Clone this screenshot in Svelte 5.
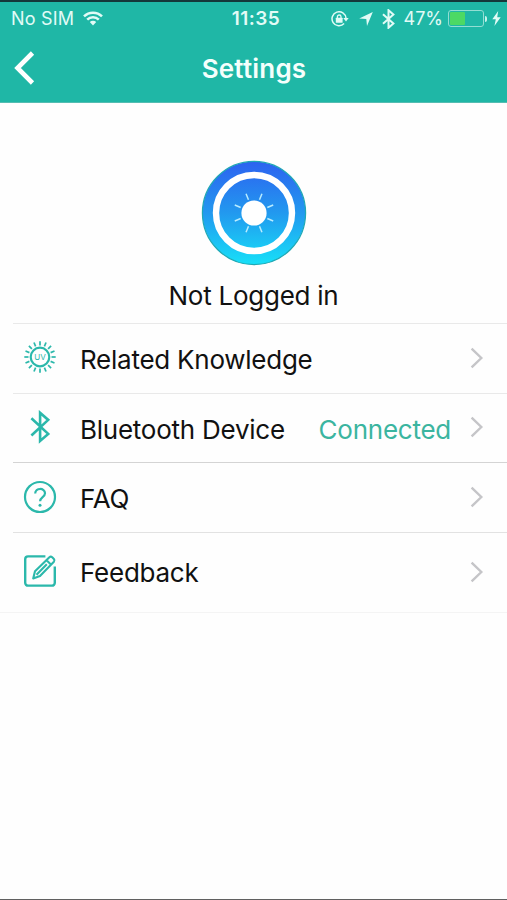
<script lang="ts">
	type Row = { icon: 'uv' | 'bluetooth' | 'faq' | 'feedback'; label: string; value?: string };

	const rows: Row[] = [
		{ icon: 'uv', label: 'Related Knowledge' },
		{ icon: 'bluetooth', label: 'Bluetooth Device', value: 'Connected' },
		{ icon: 'faq', label: 'FAQ' },
		{ icon: 'feedback', label: 'Feedback' }
	];

	const battery = 47;
	const uvRays = Array.from({ length: 16 }, (_, i) => i * 22.5);
	const sunRays = Array.from({ length: 8 }, (_, i) => 22.5 + i * 45);
</script>

<div class="screen">
	<header>
		<div class="status">
			<div class="carrier">
				<span>No SIM</span>
				<svg width="20" height="15" viewBox="0 0 20 15" fill="none" stroke="currentColor" stroke-width="2.5">
					<path d="M1 5.4a12.7 12.7 0 0 1 18 0M4.2 8.7a8.2 8.2 0 0 1 11.6 0" />
					<path d="M6.8 11.1a4.6 4.6 0 0 1 6.4 0L10 14.4z" fill="currentColor" stroke="none" />
				</svg>
			</div>
			<span class="time">11:35</span>
			<div class="indicators">
				<svg class="lock" width="18" height="16" viewBox="0 0 18 16" fill="none" stroke="currentColor">
					<path d="M13.1 12.6A7 7 0 1 1 15 7.2" stroke-width="1.5" />
					<path d="M12.3 7h5.4L15 10.6z" fill="currentColor" stroke="none" />
					<rect x="4.8" y="6.8" width="6.8" height="4.9" rx=".5" fill="currentColor" stroke="none" />
					<path d="M6.4 7.3V5.8a1.8 1.8 0 0 1 3.6 0v1.5" stroke-width="1.3" />
				</svg>
				<svg class="location" width="14" height="14" viewBox="0 0 14 14" fill="currentColor">
					<path d="M13.8.1 8 13.9 7.3 7.1.2 6.4z" />
				</svg>
				<svg class="bt" width="13" height="20" viewBox="0 0 13 20" fill="none" stroke="currentColor" stroke-width="2">
					<path d="m1 5.3 10.4 9.3-4.9 4.2V1.2l4.9 4.2L1 14.7" />
				</svg>
				<span class="percent">{battery}%</span>
				<div class="battery"><div class="level" style:width="{battery}%"></div></div>
				<i class="nub"></i>
				<svg class="bolt" width="9" height="15" viewBox="0 0 9 15" fill="currentColor">
					<path d="M6.2 0 .3 8.3h3.5L2.4 15 8.7 6.2H5.2z" />
				</svg>
			</div>
		</div>
		<nav>
			<button type="button" class="back" aria-label="Back">
				<svg width="22" height="34" viewBox="0 0 22 34" fill="none" stroke="#fff" stroke-width="4.6">
					<path d="M19.5 2 4.5 17l15 15" />
				</svg>
			</button>
			<h1>Settings</h1>
		</nav>
	</header>

	<section class="profile">
		<svg width="106" height="106" viewBox="0 0 106 106" fill="none">
			<defs>
				<linearGradient id="sky" x1="0" y1="0" x2="0" y2="1">
					<stop offset="0" stop-color="#2d62f0" />
					<stop offset=".5" stop-color="#2299ef" />
					<stop offset="1" stop-color="#17e0f8" />
				</linearGradient>
			</defs>
			<circle cx="53" cy="53" r="51.6" fill="url(#sky)" stroke="#20a8b4" stroke-width="1.2" />
			<circle cx="53" cy="53" r="38" stroke="#fff" stroke-width="6.4" />
			<circle cx="53" cy="53" r="12.6" fill="#fff" />
			{#each sunRays as angle}
				<path d="M53 32.2v6.4" stroke="#b9ecff" stroke-width="1.5" transform="rotate({angle} 53 53)" />
			{/each}
		</svg>
		<p>Not Logged in</p>
	</section>

	<ul>
		{#each rows as row}
			<li class={row.icon}>
				<svg class="icon" width="34" height="34" viewBox="0 0 34 34" fill="none" stroke="currentColor">
					{#if row.icon === 'uv'}
						<circle cx="17" cy="17" r="9.3" stroke-width="2.2" />
						{#each uvRays as angle}
							<path d="M17 1.3v4.2" stroke-width="1.7" transform="rotate({angle} 17 17)" />
						{/each}
						<text x="17" y="20" text-anchor="middle">UV</text>
					{:else if row.icon === 'bluetooth'}
						<path d="m8.4 8.3 16.8 15.6-8.1 7V2.8l8.1 7.1L8.4 25.5" stroke-width="2.6" />
					{:else if row.icon === 'faq'}
						<circle cx="17" cy="17" r="15" stroke-width="2.2" />
						<path d="M12.2 13.6c0-6.2 9.8-6 9.8-.4 0 3.9-4.9 3.8-4.9 8" stroke-width="2.2" />
						<circle cx="17" cy="25.2" r="1.5" fill="currentColor" stroke="none" />
					{:else}
						<path d="M22.4 2.4H5A2.8 2.8 0 0 0 2.2 5.2v23.6A2.8 2.8 0 0 0 5 31.6h24a2.8 2.8 0 0 0 2.8-2.8V12.5" stroke-width="2.4" />
						<path d="m10.2 24.4 1.8-7.2L26.4 3.3q1.4-1.2 2.8 0l1.7 1.7q1.2 1.4 0 2.7L17 21.9zM23.6 6.3l4.5 4.4M13.5 20.7 23.8 10.3" stroke-width="2.1" stroke-linejoin="round" />
					{/if}
				</svg>
				<span class="label">{row.label}</span>
				{#if row.value}
					<span class="value">{row.value}</span>
				{/if}
				<svg class="chevron" width="14" height="22" viewBox="0 0 14 22" fill="none" stroke="#c5c5c8" stroke-width="2.4">
					<path d="m1.6 1.7 9.7 9.3-9.7 9.3" />
				</svg>
			</li>
		{/each}
	</ul>
</div>

<style>
	:global(body) {
		background: #fefefe;
	}
	.screen {
		box-sizing: border-box;
		height: 900px;
		border-bottom: 1px solid #606060;
		background: #fefefe;
		color: #111;
		font-family: Inter, 'Liberation Sans', sans-serif;
	}
	header {
		box-sizing: border-box;
		height: 103px;
		border-top: 2px solid #14383a;
		border-bottom: 1px solid #55bdb2;
		background: #1fb7a6;
	}
	.status {
		display: grid;
		grid-template-columns: 1fr auto 1fr;
		align-items: center;
		height: 33px;
		padding: 0 6px 0 11px;
		color: #e2fbf6;
		font-size: 18px;
	}
	.carrier,
	.indicators {
		display: flex;
		align-items: center;
	}
	.carrier {
		gap: 9px;
		letter-spacing: 0.2px;
	}
	.time {
		font-size: 19px;
		font-weight: 600;
		letter-spacing: 0.5px;
	}
	.indicators {
		justify-content: flex-end;
	}
	.location {
		margin-left: 10px;
	}
	.bt {
		margin: 0 9px;
	}
	.battery {
		box-sizing: border-box;
		width: 36px;
		height: 17px;
		margin-left: 5px;
		padding: 1px;
		border: 1px solid #92ded3;
		border-radius: 3px;
	}
	.level {
		height: 100%;
		border-radius: 1px;
		background: #4cd964;
	}
	.nub {
		width: 2px;
		height: 6px;
		margin: 0 5px 0 1px;
		border-radius: 0 2px 2px 0;
		background: #c9f2ec;
	}
	nav {
		display: grid;
		grid-template-columns: 60px 1fr 60px;
		align-items: center;
		height: 66px;
	}
	.back {
		display: flex;
		padding: 0 0 0 13px;
		border: 0;
		background: none;
	}
	h1 {
		margin: 2px 0 0 1px;
		color: #f4fffc;
		font-size: 26px;
		font-weight: 600;
		letter-spacing: 0.2px;
		line-height: 30px;
		text-align: center;
	}
	.profile {
		display: flex;
		flex-direction: column;
		align-items: center;
		box-sizing: border-box;
		height: 220px;
		padding-top: 57px;
	}
	.profile p {
		margin: 14px 0 0;
		font-size: 26px;
		letter-spacing: -0.25px;
		line-height: 32px;
	}
	ul {
		margin: 0;
		padding: 0;
		border-bottom: 1px solid #f4f4f4;
		list-style: none;
	}
	li {
		display: flex;
		align-items: center;
		box-sizing: border-box;
		height: 70px;
		margin-left: 13px;
		padding: 0 23px 2px 10px;
		border-top: 1px solid #e9e9e9;
	}
	li.bluetooth {
		height: 69px;
	}
	li.faq {
		border-top-color: #d4d4d4;
	}
	li.feedback {
		height: 80px;
		border-top-color: #e2e2e2;
	}
	.icon {
		flex: none;
		margin-right: 23px;
		color: #2bb8ab;
	}
	.uv .icon {
		margin-bottom: 1px;
	}
	.feedback .icon {
		margin-bottom: 2px;
	}
	.icon text {
		fill: currentColor;
		stroke: none;
		font-size: 8px;
	}
	.label,
	.value {
		margin-top: 4px;
		font-size: 26px;
		letter-spacing: -0.25px;
		line-height: 32px;
		white-space: nowrap;
	}
	.bluetooth .label,
	.bluetooth .value {
		margin-top: 5px;
	}
	.feedback .label {
		margin-top: 2px;
	}
	.value {
		margin-left: auto;
		color: #3bb5a0;
	}
	.chevron {
		flex: none;
		margin-left: auto;
	}
	.value + .chevron {
		margin-left: 19px;
	}
</style>
